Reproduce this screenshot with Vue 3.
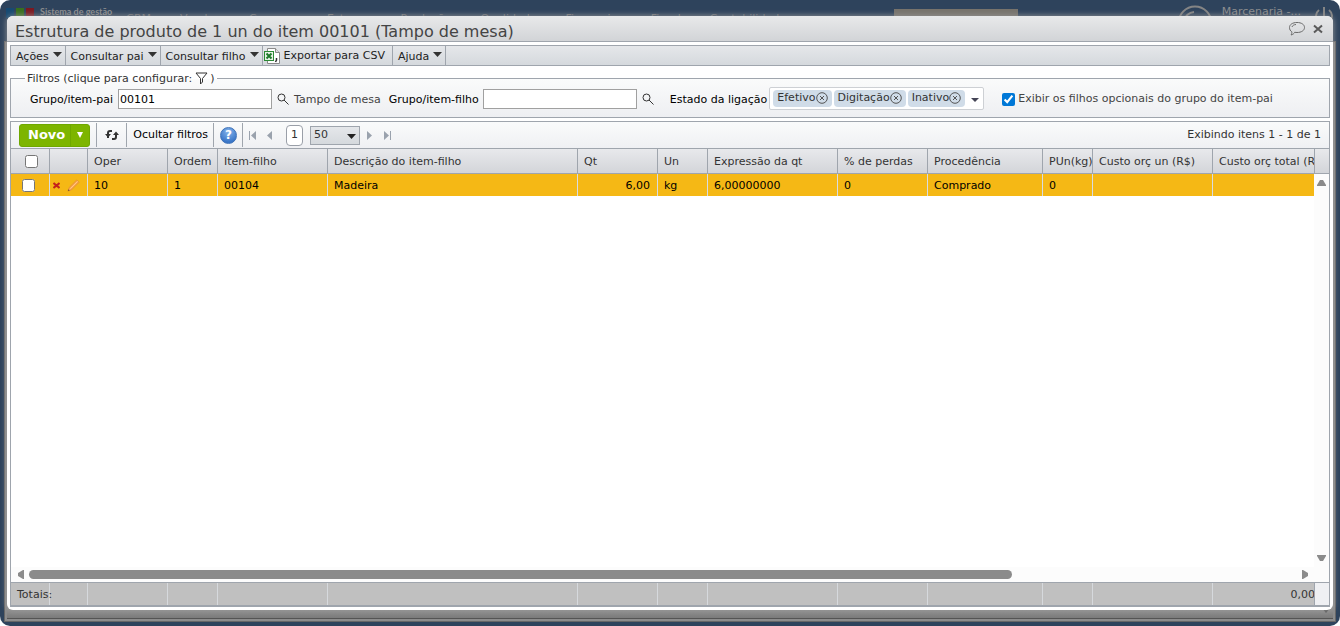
<template>
    <div id="desktop">
        <header class="topbar">
            <span class="logo"><i class="blue"></i><i class="green"></i><i class="red"></i></span>
            <span class="brand">Sistema de gestão</span>
            <nav class="modules">
                <span v-for="m in modules" :key="m">{{ m }} ▾</span>
            </nav>
            <span class="search"></span>
            <svg class="avatar" viewBox="0 0 36 36"><circle cx="18" cy="18" r="16.5" /><path d="M7 16a11 11 0 0 1 10-9" /></svg>
            <span class="company">Marcenaria -...</span>
            <svg class="power" viewBox="0 0 20 20"><path d="M10 1v10M5 4a8 8 0 1 0 10 0" /></svg>
        </header>
        <div class="backdrop">
            <div class="backfoot">
                <svg viewBox="0 0 8 6"><path d="M0 1h8L4 6z" /></svg>
            </div>
        </div>

        <section class="window">
            <div class="titlebar">
                <h1>Estrutura de produto de 1 un do item 00101 (Tampo de mesa)</h1>
                <button class="plain" aria-label="Comentários">
                    <svg class="balloon" viewBox="0 0 18 16"><path d="M9 1.500c4.400 0 7.500 2 7.500 5s-3.100 5-7.500 5c-.8 0-1.600-.1-2.300-.2C6 12.600 5 13.500 3 14c.8-1 .9-2.200.8-3.200C2.300 9.900 1.500 8.300 1.500 6.500c0-3 3.100-5 7.500-5z" /><path d="M4 6c.3-1.300 1.700-2.300 4-2.500" /></svg>
                </button>
                <button class="plain" aria-label="Fechar">
                    <svg class="close" viewBox="0 0 10 10"><path d="M1 1.500l8 7M9 1.500l-8 7" /></svg>
                </button>
            </div>

            <div class="menubar">
                <button v-for="m in menus" :key="m.text" :class="{ csv: m.icon }">
                    <svg v-if="m.icon" class="xls" viewBox="0 0 16 16">
                        <path d="M3.500.5h8l4 4v11h-12z" fill="#fff" stroke="#8a8a8a" />
                        <path d="M11.500.5v4h4" fill="#ddd" stroke="#8a8a8a" />
                        <rect x=".5" y="3.500" width="9" height="9" fill="#e8f3e6" stroke="#2b8a35" />
                        <path d="M2.500 5.500l5 5M7.500 5.500l-5 5" stroke="#1f7a2b" stroke-width="2" />
                        <path d="M12.500 10v2l-1 2" fill="none" stroke="#333" stroke-width="1.500" />
                    </svg>
                    {{ m.text }}
                    <svg v-if="!m.icon" class="caret" viewBox="0 0 9 5"><path d="M0 0h9L4.500 5z" /></svg>
                </button>
            </div>

            <fieldset class="filters">
                <legend>Filtros (clique para configurar:
                    <svg class="funnel" viewBox="0 0 13 13"><path d="M1 1h11L7.500 6.500V10l-2 2V6.500z" /></svg>)
                </legend>
                <div class="fields">
                    <label for="pai">Grupo/item-pai</label>
                    <input id="pai" v-model="pai" type="text">
                    <button class="plain lens" aria-label="Pesquisar item-pai">
                        <svg viewBox="0 0 12 12"><circle cx="4.500" cy="4.500" r="3.500" /><path d="M7 7l4.500 4.500" /></svg>
                    </button>
                    <span class="hint">Tampo de mesa</span>
                    <label for="filho">Grupo/item-filho</label>
                    <input id="filho" v-model="filho" type="text">
                    <button class="plain lens" aria-label="Pesquisar item-filho">
                        <svg viewBox="0 0 12 12"><circle cx="4.500" cy="4.500" r="3.500" /><path d="M7 7l4.500 4.500" /></svg>
                    </button>
                    <span class="state">Estado da ligação</span>
                    <div class="chips">
                        <span v-for="s in estados" :key="s" class="chip">{{ s }}<button class="plain" :aria-label="'Remover ' + s" @click="remove(s)"><svg viewBox="0 0 12 12"><circle cx="6" cy="6" r="5.300" /><path d="M4 4l4 4M8 4L4 8" /></svg></button></span>
                        <button class="plain open" aria-label="Abrir"><svg viewBox="0 0 8 4"><path d="M0 0h8L4 4z" /></svg></button>
                    </div>
                    <input id="opc" v-model="opcionais" type="checkbox">
                    <label for="opc" class="hint">Exibir os filhos opcionais do grupo do item-pai</label>
                </div>
            </fieldset>

            <div class="grid">
                <div class="pager">
                    <div class="novo">
                        <button>Novo</button>
                        <button aria-label="Mais opções"><svg viewBox="0 0 6 6"><path d="M0 0h6L3 6z" /></svg></button>
                    </div>
                    <button class="tool refresh" aria-label="Atualizar">
                        <svg viewBox="0 0 14 12"><path d="M7 2H5Q3 2 3 4V9M7 10h2q2 0 2-2V4" /><path class="tip" d="M0 5h6L3 8.500zM8 6h6L11 2.500z" /></svg>
                    </button>
                    <button class="tool">Ocultar filtros</button>
                    <button class="tool help" aria-label="Ajuda"><span>?</span></button>
                    <button class="plain nav" aria-label="Primeira"><svg viewBox="0 0 7 9"><path d="M0 0h1v9H0zM7 0v9L2 4.500z" /></svg></button>
                    <button class="plain nav prev" aria-label="Anterior"><svg viewBox="0 0 7 9"><path d="M6 0v9L1 4.500z" /></svg></button>
                    <button class="page">1</button>
                    <div class="size">
                        <select v-model="size" aria-label="Itens por página">
                            <option>50</option>
                            <option>100</option>
                        </select>
                        <svg viewBox="0 0 9 5"><path d="M0 0h9L4.500 5z" /></svg>
                    </div>
                    <button class="plain nav next" aria-label="Próxima"><svg viewBox="0 0 7 9"><path d="M1 0v9l5-4.500z" /></svg></button>
                    <button class="plain nav" aria-label="Última"><svg viewBox="0 0 7 9"><path d="M0 0v9l5-4.500zM6 0h1v9H6z" /></svg></button>
                    <span class="info">Exibindo itens 1 - 1 de 1</span>
                </div>

                <div class="head">
                    <div class="clip">
                        <table>
                            <colgroup><col v-for="(c, i) in cols" :key="i" :style="{ width: c.w + 'px' }"></colgroup>
                            <thead>
                                <tr>
                                    <th v-for="(c, i) in cols" :key="i">
                                        <input v-if="i === 0" v-model="all" type="checkbox" aria-label="Selecionar todos">
                                        {{ c.text }}
                                    </th>
                                </tr>
                            </thead>
                        </table>
                    </div>
                    <div class="gutter"></div>
                </div>

                <div class="body">
                    <div class="clip">
                        <table>
                            <colgroup><col v-for="(c, i) in cols" :key="i" :style="{ width: c.w + 'px' }"></colgroup>
                            <tbody>
                                <tr v-for="(row, r) in rows" :key="r">
                                    <td class="check"><input v-model="row.sel" type="checkbox" aria-label="Selecionar linha"></td>
                                    <td class="acts">
                                        <button class="plain" aria-label="Excluir"><svg class="del" viewBox="0 0 7 7"><path d="M.5 1l6 5M6.500 1l-6 5" /></svg></button>
                                        <button class="plain" aria-label="Editar">
                                            <svg class="pencil" viewBox="0 0 14 14"><path d="M1 13l1.200-3.700L10.500 1l2.500 2.500-8.300 8.300z" fill="#f9a64a" stroke="#e08a35" stroke-width=".7" /><path d="M3.500 10.500l8-8" stroke="#ffc98a" /><path d="M1 13l.6-1.900 1.300 1.300z" fill="#6b4a2a" /></svg>
                                        </button>
                                    </td>
                                    <td v-for="(v, i) in row.cells" :key="i" :class="{ num: i === 4 }">{{ v }}</td>
                                </tr>
                            </tbody>
                        </table>
                    </div>
                    <div class="vscroll">
                        <svg viewBox="0 0 9 7"><path d="M0 7V6l3-5h3l3 5v1z" /></svg>
                        <svg viewBox="0 0 9 7"><path d="M0 0v1l3 5h3l3-5V0z" /></svg>
                    </div>
                </div>

                <div class="hscroll">
                    <svg viewBox="0 0 7 9"><path d="M7 0H6L1 3v3l5 3h1z" /></svg>
                    <div class="track"><div class="thumb"></div></div>
                    <svg viewBox="0 0 7 9"><path d="M0 0h1l5 3v3L1 9H0z" /></svg>
                </div>

                <div class="foot">
                    <div class="clip">
                        <table>
                            <colgroup><col v-for="(c, i) in cols" :key="i" :style="{ width: c.w + 'px' }"></colgroup>
                            <tfoot>
                                <tr>
                                    <td v-for="(c, i) in cols" :key="i" :class="{ total: c.total }">{{ i === 0 ? 'Totais:' : c.total }}</td>
                                </tr>
                            </tfoot>
                        </table>
                    </div>
                    <div class="gutter"></div>
                </div>
            </div>
        </section>
    </div>
</template>

<script setup>
import { ref } from 'vue'

const modules = ['CRM', 'Vendas', 'Compras', 'Estoque', 'Produção', 'Qualidade', 'Financeiro', 'Fiscal', 'Contabilidade']

const menus = [
    { text: 'Ações' },
    { text: 'Consultar pai' },
    { text: 'Consultar filho' },
    { text: 'Exportar para CSV', icon: true },
    { text: 'Ajuda' }
]

const pai = ref('00101')
const filho = ref('')
const estados = ref(['Efetivo', 'Digitação', 'Inativo'])
const opcionais = ref(true)
const size = ref('50')
const all = ref(false)

const cols = [
    { text: '', w: 39 },
    { text: '', w: 38 },
    { text: 'Oper', w: 80 },
    { text: 'Ordem', w: 50 },
    { text: 'Item-filho', w: 110 },
    { text: 'Descrição do item-filho', w: 250 },
    { text: 'Qt', w: 80 },
    { text: 'Un', w: 50 },
    { text: 'Expressão da qt', w: 130 },
    { text: '% de perdas', w: 90 },
    { text: 'Procedência', w: 115 },
    { text: 'PUn(kg)', w: 50 },
    { text: 'Custo orç un (R$)', w: 120 },
    { text: 'Custo orç total (R$)', w: 120, total: '0,00' }
]

const rows = ref([
    { sel: false, cells: ['10', '1', '00104', 'Madeira', '6,00', 'kg', '6,00000000', '0', 'Comprado', '0', '', ''] }
])

function remove(s) {
    estados.value = estados.value.filter(e => e !== s)
}
</script>

<style>
body {
    background: #fff;
}
</style>

<style scoped>
* {
    box-sizing: border-box;
}

#desktop {
    position: relative;
    height: 100vh;
    display: flex;
    flex-direction: column;
    overflow: hidden;
    padding: 0 4px 4px;
    border-radius: 10px;
    background: #2e435c;
    font-family: Verdana, "DejaVu Sans", sans-serif;
    font-size: 11px;
    line-height: 14px;
    color: #333;
}

button, input, select {
    font: inherit;
    color: inherit;
    margin: 0;
}

button {
    border: 0;
    background: none;
    cursor: pointer;
}

svg {
    display: block;
    flex: none;
}

.plain {
    display: flex;
    padding: 0;
}

.topbar {
    display: flex;
    align-items: flex-start;
    height: 41px;
    padding: 5px 2px 0;
    overflow: hidden;
    color: #8b8c8e;
}

.logo {
    display: flex;
    gap: 2px;
    padding-top: 3px;
}

.logo i {
    width: 8px;
    height: 10px;
}

.blue { background: #174a72; }
.green { background: #37701d; }
.red { background: #7d1820; }

.brand {
    margin-left: 6px;
    font: bold 9px/14px Lato, sans-serif;
}

.modules {
    display: flex;
    flex: 1;
    gap: 20px;
    padding: 7px 0 0 14px;
    white-space: nowrap;
    color: #77797c;
}

.search {
    width: 124px;
    height: 20px;
    margin: 4px 159px 0 0;
    background: #77736c;
}

.avatar {
    width: 36px;
    height: 36px;
    fill: none;
    stroke: #858585;
    stroke-width: 2;
}

.company {
    margin: 0 13px 0 9px;
}

.power {
    width: 20px;
    height: 20px;
    margin-top: 1px;
    fill: none;
    stroke: #858585;
    stroke-width: 2;
}

.backdrop {
    flex: 1;
    display: flex;
    align-items: flex-end;
    border: 1px solid #666;
    background: #8c8c8c;
}

.backfoot {
    flex: 1;
    display: flex;
    justify-content: flex-end;
    height: 14px;
    margin: 0 2px 2px;
    padding: 2px 3px;
    border-bottom: 1px solid #545454;
    background: linear-gradient(#9a9a9a, #7b7b7b);
}

.backfoot svg {
    width: 8px;
    height: 6px;
    fill: #555;
}

.window {
    position: absolute;
    inset: 16px 7px 16px 7px;
    display: flex;
    flex-direction: column;
    padding: 0 3px 3px;
    border-radius: 6px;
    background: #fff;
    box-shadow: 0 0 6px #999;
}

.titlebar {
    display: flex;
    align-items: center;
    gap: 7px;
    height: 26px;
    margin: 0 -3px 3px;
    padding: 0 10px 0 8px;
    border-bottom: 1px solid #9fa5ad;
    border-radius: 6px 6px 0 0;
    background: linear-gradient(#e8e9ea, #d2d4d7);
}

h1 {
    flex: 1;
    margin: 0;
    padding-top: 6px;
    font-size: 16px;
    line-height: 20px;
    font-weight: normal;
    color: #444;
}

.balloon {
    width: 18px;
    height: 16px;
    fill: none;
    stroke: #6a6a6a;
}

.close {
    width: 10px;
    height: 10px;
    stroke: #5a5a5a;
    stroke-width: 2;
}

.menubar {
    display: flex;
    height: 21px;
    border: 1px solid #9fa5ad;
    background: linear-gradient(#e5e7ea, #d5d9dd);
}

.menubar button {
    display: flex;
    align-items: center;
    gap: 4px;
    padding: 2px 3px 0 5px;
    border-right: 1px solid #9fa5ad;
    color: #222;
}

.menubar .csv {
    padding: 1px 7px 0 1px;
}

.xls {
    width: 16px;
    height: 16px;
}

.caret {
    width: 9px;
    height: 5px;
    margin-bottom: 5px;
    fill: #333;
}

.filters {
    min-width: 0;
    margin: 4px 0 3px;
    padding: 2px 10px 7px 14px;
    border: 1px solid #9fa5ad;
    background: linear-gradient(#fafbfb, #eeeff2);
}

legend {
    display: flex;
    align-items: center;
    height: 16px;
    padding: 2px 2px 0;
}

.funnel {
    width: 13px;
    height: 13px;
    margin: 0 2px 2px 3px;
    fill: none;
    stroke: #333;
}

.fields {
    display: flex;
    align-items: center;
    height: 22px;
    padding-left: 5px;
    white-space: nowrap;
}

.fields label,
.fields > span {
    padding-top: 2px;
}

.fields label {
    color: #000;
}

.fields .hint {
    color: #444;
}

.fields input[type="text"] {
    width: 154px;
    height: 20px;
    margin-left: 5px;
    padding: 0 1px;
    border: 1px solid #a0a0a0;
    background: #fff;
    color: #000;
}

.lens {
    margin: 0 5px;
}

.lens svg {
    width: 12px;
    height: 12px;
    fill: none;
    stroke: #333;
    stroke-width: 1;
}

.hint + label {
    margin-left: 8px;
}

.fields #filho {
    margin-left: 4px;
}

.state {
    margin-left: 11px;
    color: #000;
}

.chips {
    display: flex;
    align-items: center;
    gap: 2px;
    height: 23px;
    margin: -2px 18px 0 2px;
    padding: 0 4px 0 3px;
    border: 1px solid #cdd0d4;
    border-radius: 2px;
    background: #fff;
}

.chip {
    display: flex;
    align-items: center;
    height: 17px;
    padding: 0 4px;
    border-radius: 4px;
    background: #d0dce8;
}

.chip svg {
    width: 12px;
    height: 12px;
    fill: none;
    stroke: #555;
}

.open {
    margin: 4px 0 0 4px;
}

.open svg {
    width: 8px;
    height: 4px;
    fill: #445;
}

input[type="checkbox"] {
    width: 13px;
    height: 13px;
    accent-color: #0078d7;
}

#opc + label {
    margin-left: 3px;
    padding-top: 0;
}

.grid {
    flex: 1;
    min-height: 0;
    display: flex;
    flex-direction: column;
    border: 1px solid #9fa5ad;
}

.pager {
    display: flex;
    align-items: center;
    height: 26px;
    padding: 0 8px;
    background: linear-gradient(#fafbfb, #eff0f3);
}

.novo {
    display: flex;
    height: 23px;
    margin-right: 6px;
    border: 1px solid #6fa800;
    border-radius: 3px;
    background: #7db500;
}

.novo button {
    display: flex;
    align-items: center;
    padding: 0 5px 0 8px;
    font-size: 13px;
    font-weight: bold;
    color: #fff;
}

.novo button + button {
    padding: 0 6px;
    border-left: 1px solid #6fa800;
}

.novo svg {
    width: 6px;
    height: 6px;
    fill: #fff;
}

.tool {
    display: flex;
    align-items: center;
    height: 24px;
    padding: 0 5px 0 6px;
    border-left: 1px solid #9fa5ad;
    color: #000;
}

.refresh {
    padding: 0 7px 0 8px;
}

.refresh svg {
    width: 14px;
    height: 12px;
    fill: none;
    stroke: #333;
    stroke-width: 2;
}

.refresh .tip {
    fill: #333;
    stroke: none;
}

.help {
    border-right: 1px solid #9fa5ad;
}

.help span {
    width: 17px;
    height: 17px;
    border: 1px solid #3f72b8;
    border-radius: 50%;
    background: radial-gradient(circle at 50% 25%, #86b5ec, #3a76c8 75%);
    font-size: 12px;
    line-height: 15px;
    font-weight: bold;
    color: #fff;
}

.nav {
    margin-left: 6px;
}

.nav + .prev {
    margin: 0 13px 0 10px;
}

.next {
    margin-right: 1px;
}

.nav + .nav {
    margin-left: 10px;
}

.nav svg {
    width: 7px;
    height: 9px;
    fill: #9aa2ad;
}

.page {
    width: 17px;
    height: 21px;
    padding: 0;
    border: 1px solid #9a9fa8;
    border-radius: 4px;
    background: #fff;
}

.size {
    display: grid;
    align-items: center;
    width: 50px;
    margin-left: 7px;
}

.size select {
    grid-area: 1 / 1;
    width: 50px;
    height: 19px;
    padding: 0 3px;
    appearance: none;
    border: 1px solid #9fa5ad;
    border-radius: 0;
    background: linear-gradient(#e5e7ea, #d5d9dd);
}

.size svg {
    grid-area: 1 / 1;
    justify-self: end;
    width: 9px;
    height: 5px;
    margin: 3px 4px 0 0;
    fill: #222;
    pointer-events: none;
}

.info {
    margin-left: auto;
}

.head, .body, .foot {
    display: flex;
}

.clip {
    flex: 1;
    min-width: 0;
    overflow: hidden;
}

table {
    width: 1322px;
    table-layout: fixed;
    border-collapse: separate;
    border-spacing: 0;
}

th, td {
    padding: 1px 6px 0;
    border-right: 1px solid #9fa5ad;
    font-weight: normal;
    text-align: left;
    white-space: nowrap;
}

.head {
    border-top: 1px solid #9fa5ad;
    border-bottom: 1px solid #9fa5ad;
    background: linear-gradient(#e8e9ec, #d3d5d9);
}

th {
    height: 24px;
}

th:first-child {
    padding-left: 14px;
}

th input {
    display: block;
}

.head .gutter {
    width: 15px;
    border-left: 1px solid #9fa5ad;
}

.body {
    flex: 1;
    min-height: 0;
    background: #fff;
}

.body td {
    height: 22px;
    border-color: #d8dce2;
    background: #f5b815;
    color: #000;
}

.body .check {
    padding: 0 0 0 11px;
}

.check input {
    display: block;
}

.acts button {
    display: inline-flex;
    vertical-align: middle;
}

.body .acts {
    padding: 0 3px;
}

.del {
    width: 7px;
    height: 7px;
    margin-right: 7px;
    stroke: #c4231c;
    stroke-width: 2;
}

.pencil {
    width: 13px;
    height: 13px;
    fill: none;
}

.body .num {
    padding-right: 7px;
    text-align: right;
}

.vscroll {
    display: flex;
    flex-direction: column;
    justify-content: space-between;
    align-items: center;
    width: 15px;
    padding: 5px 0 5px;
    background: #fcfcfc;
}

.vscroll svg {
    width: 9px;
    height: 7px;
    fill: #8b8b8b;
}

.hscroll {
    display: flex;
    align-items: center;
    gap: 5px;
    height: 15px;
    padding: 0 20px 0 6px;
    background: #fcfcfc;
}

.hscroll svg {
    width: 7px;
    height: 9px;
    fill: #8b8b8b;
}

.track {
    flex: 1;
    margin-right: 8px;
}

.thumb {
    width: 78%;
    height: 9px;
    border-radius: 5px;
    background: #8b8b8b;
}

.foot {
    border-top: 1px solid #9fa5ad;
    border-bottom: 1px solid #9fa5ad;
    background: #c0c0c0;
}

.foot td {
    height: 22px;
    border-color: #d6d9dd;
}

.foot .total {
    padding-right: 17px;
    text-align: right;
}

.foot .gutter {
    width: 15px;
    border-left: 1px solid #9fa5ad;
    background: #eff0f3;
}
</style>
